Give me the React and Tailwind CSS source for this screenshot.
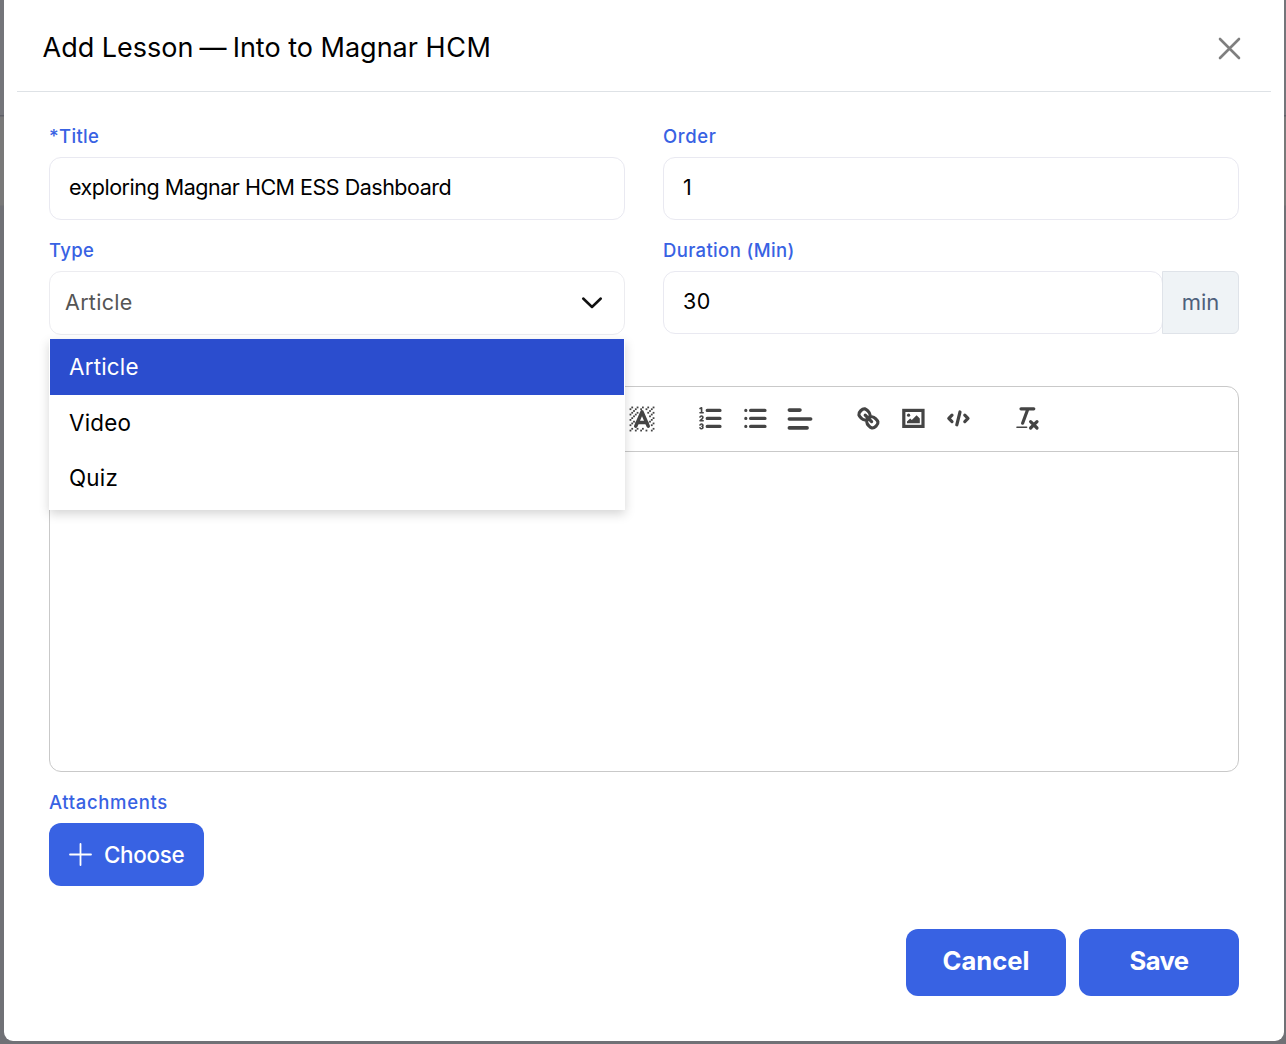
import React, { useState } from "react";
import { clsx } from "clsx";

const lessonTypes = ["Article", "Video", "Quiz"];

const Label = ({ children, className = "tracking-[0.35px]" }) => (
  <span
    className={clsx(
      "block h-[21px] text-[18.5px] leading-[21px] font-medium text-[#3862e3]",
      className
    )}
  >
    {children}
  </span>
);

// Toolbar icons share one 18x18 grid
const Icon = ({ children, className = "size-[28.8px]" }) => (
  <svg
    viewBox="0 0 18 18"
    className={clsx("block shrink-0", className)}
    fill="none"
    stroke="#444"
    strokeWidth="2"
    strokeLinecap="round"
    strokeLinejoin="round"
  >
    {children}
  </svg>
);

const hatch = [
  [5, 6], [4, 4], [6, 5], [2, 6], [3, 5], [4, 7], [3, 11], [2, 12], [2, 9],
  [2, 15], [4, 10], [3, 8], [12, 2], [11, 3], [8, 3], [2, 3], [6, 2], [3, 2],
  [5, 3], [9, 2], [15, 14], [13, 10], [13, 7], [15, 5], [14, 6], [15, 8],
  [14, 9], [3, 14], [14, 3], [15, 2], [12, 5], [13, 4], [9, 14], [8, 15],
  [6, 14], [5, 15], [11, 15], [14, 12], [14, 15], [15, 11],
];

const BackgroundIcon = () => (
  <Icon className="size-8">
    <g fill="#444" stroke="none">
      {hatch.map(([x, y]) => (
        <rect key={`${x}-${y}`} x={x} y={y} width="1" height="1" />
      ))}
    </g>
    <polyline points="5.5 13 9 5 12.5 13" />
    <line x1="11.63" x2="6.38" y1="11" y2="11" />
  </Icon>
);

const OrderedIcon = () => (
  <Icon>
    <path d="M7 4h8M7 9h8M7 14h8" />
    <g strokeWidth="1">
      <path d="M2.5 5.5h2M2.5 2.8l1-.4v3" />
      <path d="M4.5,10.5h-2c0-.234,1.85-1.076,1.85-2.234A0.959,0.959,0,0,0,2.5,8.156" />
      <path d="M2.5,14.846a0.959,0.959,0,0,0,1.85-.109A0.7,0.7,0,0,0,3.75,14a0.688,0.688,0,0,0,.6-0.736,0.959,0.959,0,0,0-1.85-.109" />
    </g>
  </Icon>
);

const BulletIcon = () => (
  <Icon>
    <path d="M6 4h9M6 9h9M6 14h9" />
    <path d="M3 4h.01M3 9h.01M3 14h.01" />
  </Icon>
);

const AlignIcon = () => (
  <Icon className="size-8">
    <path d="M3 9h12M3 14h10M3 4h6" />
  </Icon>
);

const LinkIcon = () => (
  <Icon>
    <line x1="7" x2="11" y1="7" y2="11" />
    <path d="M8.9,4.577a3.476,3.476,0,0,1,.36,4.679A3.476,3.476,0,0,1,4.577,8.9C3.185,7.5,2.035,6.4,4.217,4.217S7.5,3.185,8.9,4.577Z" />
    <path d="M13.423,9.1a3.476,3.476,0,0,0-4.679-.36,3.476,3.476,0,0,0,.36,4.679c1.392,1.392,2.5,2.542,4.679.36S14.815,10.5,13.423,9.1Z" />
  </Icon>
);

const ImageIcon = () => (
  <Icon>
    <rect height="10" width="12" x="3" y="4" strokeLinejoin="miter" />
    <g fill="#444" stroke="none">
      <circle cx="6" cy="7" r="1" />
      <polyline points="5 12 5 11 7 9 8 10 11 7 13 9 13 12 5 12" />
    </g>
  </Icon>
);

const CodeIcon = () => (
  <Icon>
    <polyline points="5 7 3 9 5 11" />
    <polyline points="13 7 15 9 13 11" />
    <line x1="10" x2="8" y1="5" y2="13" />
  </Icon>
);

const CleanIcon = () => (
  <Icon>
    <path d="M5 3h8M6 12L9.35 3M11 11l4 4M15 11l-4 4" />
    <rect fill="#444" stroke="none" height="1" rx="0.5" width="7" x="2" y="14" />
  </Icon>
);

const App = () => {
  const [title, setTitle] = useState("exploring Magnar HCM ESS Dashboard");
  const [order, setOrder] = useState("1");
  const [duration, setDuration] = useState("30");
  const [type, setType] = useState("Article");

  return (
    <div className="flex h-[1044px] w-[1286px] overflow-hidden bg-[#707176] bg-[linear-gradient(#74757a_0,#74757a_115px,#5f6068_115px,#5f6068_116px,#797979_117px,#797979_205px,#707176_206px)] pr-0.5 pb-[3px] pl-1 font-['Inter',sans-serif] text-black">
      <div className="flex w-full flex-col rounded-b-[9px] bg-white">
        {/* Header */}
        <div className="mx-[13px] flex h-[92px] shrink-0 items-center justify-between border-b border-[#dee2e6] pr-[30px] pl-[25.5px]">
          <h1 className="pt-1 text-[27px] leading-8 whitespace-nowrap">
            Add Lesson <span className="-mx-[1.5px]">—</span> Into to Magnar{" "}
            <span className="tracking-[0.6px]">HCM</span>
          </h1>
          <button className="pt-[5px]" aria-label="Close">
            <svg
              className="block size-[23px]"
              viewBox="0 0 23 23"
              stroke="#7f7f7f"
              strokeWidth="2.6"
              strokeLinecap="round"
            >
              <path d="M2 2l19 19M21 2L2 21" />
            </svg>
          </button>
        </div>

        <div className="px-[45px] pt-[34px]">
          <div className="grid grid-cols-2 gap-x-[38px]">
            <div className="h-[114px]">
              <Label>*Title</Label>
              <input
                type="text"
                value={title}
                onChange={(e) => setTitle(e.target.value)}
                className="mt-2.5 h-[63px] w-full rounded-xl border border-[#e9e9f1] px-[19px] pb-[3px] text-[21.5px] tracking-[-0.49px] outline-none"
              />
            </div>
            <div className="h-[114px]">
              <Label className="tracking-[0.6px]">Order</Label>
              <input
                type="text"
                value={order}
                onChange={(e) => setOrder(e.target.value)}
                className="mt-2.5 h-[63px] w-full rounded-xl border border-[#e9e9f1] px-[19px] pb-[3px] text-[21.5px] outline-none"
              />
            </div>
            <div className="relative h-[95px]">
              <Label>Type</Label>
              <button className="mt-2.5 flex h-16 w-full items-center justify-between rounded-xl border border-[#ececf0] pr-[21px] pb-px pl-[15px] text-[21.5px] tracking-[0.3px] text-[#555]">
                {type}
                <svg
                  className="block h-[14px] w-[22px]"
                  viewBox="0 0 22 14"
                  fill="none"
                  stroke="#111"
                  strokeWidth="2.5"
                  strokeLinecap="round"
                  strokeLinejoin="round"
                >
                  <path d="M2.2 2.5L11 11L19.8 2.5" />
                </svg>
              </button>
              <ul className="absolute top-[99px] left-0 z-10 w-full bg-white px-px pb-1 shadow-[0_4px_10px_rgba(0,0,0,0.17)]">
                {lessonTypes.map((item) => (
                  <li
                    key={item}
                    onClick={() => setType(item)}
                    className={clsx(
                      "flex h-[55.6px] items-center pl-[19px] text-[22.4px] tracking-[0.2px]",
                      item === type && "bg-[#2b4dce] text-white"
                    )}
                  >
                    {item}
                  </li>
                ))}
              </ul>
            </div>
            <div className="h-[95px]">
              <Label>Duration (Min)</Label>
              <div className="mt-2.5 flex h-[63px]">
                <input
                  type="text"
                  value={duration}
                  onChange={(e) => setDuration(e.target.value)}
                  className="min-w-0 flex-1 rounded-xl border border-[#e9e9f1] px-[19px] pb-0.5 text-[21.5px] tracking-[0.4px] outline-none"
                />
                <span className="-ml-px flex w-[77px] items-center justify-center rounded-r-[6px] border border-[#dfe3e9] bg-[#eff3f6] text-[22px] text-[#4e607c]">
                  min
                </span>
              </div>
            </div>
          </div>

          {/* Content editor */}
          <div className="mt-[51px] h-[386px] rounded-xl border border-[#c9c9c9]">
            <div className="flex h-[65px] items-center border-b border-[#c9c9c9] pl-[576px]">
              <BackgroundIcon />
              <div className="ml-[37.8px] flex items-center gap-4 pb-[1.6px]">
                <OrderedIcon />
                <BulletIcon />
              </div>
              <div className="ml-[14.4px]">
                <AlignIcon />
              </div>
              <div className="ml-[38.6px] flex items-center gap-4 pb-[1.6px]">
                <LinkIcon />
                <ImageIcon />
                <CodeIcon />
              </div>
              <div className="ml-[40.6px] pb-[1.6px]">
                <CleanIcon />
              </div>
            </div>
          </div>

          <Label className="mt-5 tracking-[0.65px]">Attachments</Label>
          <button className="mt-2.5 flex h-[63px] w-[155px] items-center gap-3 rounded-xl bg-[#3862e3] pl-5 text-[22.4px] font-medium tracking-[-0.3px] text-white">
            <svg
              className="block size-[23px] shrink-0"
              viewBox="0 0 23 23"
              stroke="currentColor"
              strokeWidth="1.8"
              strokeLinecap="round"
            >
              <path d="M11.5 1v21M1 11.5h21" />
            </svg>
            Choose
          </button>

          <div className="mt-[43px] flex justify-end gap-[13px]">
            <button className="h-[67px] w-40 rounded-xl bg-[#3862e3] pb-0.5 text-[25.6px] font-bold text-white">
              Cancel
            </button>
            <button className="h-[67px] w-40 rounded-xl bg-[#3862e3] pb-0.5 text-[25.6px] font-bold tracking-[-0.6px] text-white">
              Save
            </button>
          </div>
        </div>
      </div>
    </div>
  );
};

export default App;
